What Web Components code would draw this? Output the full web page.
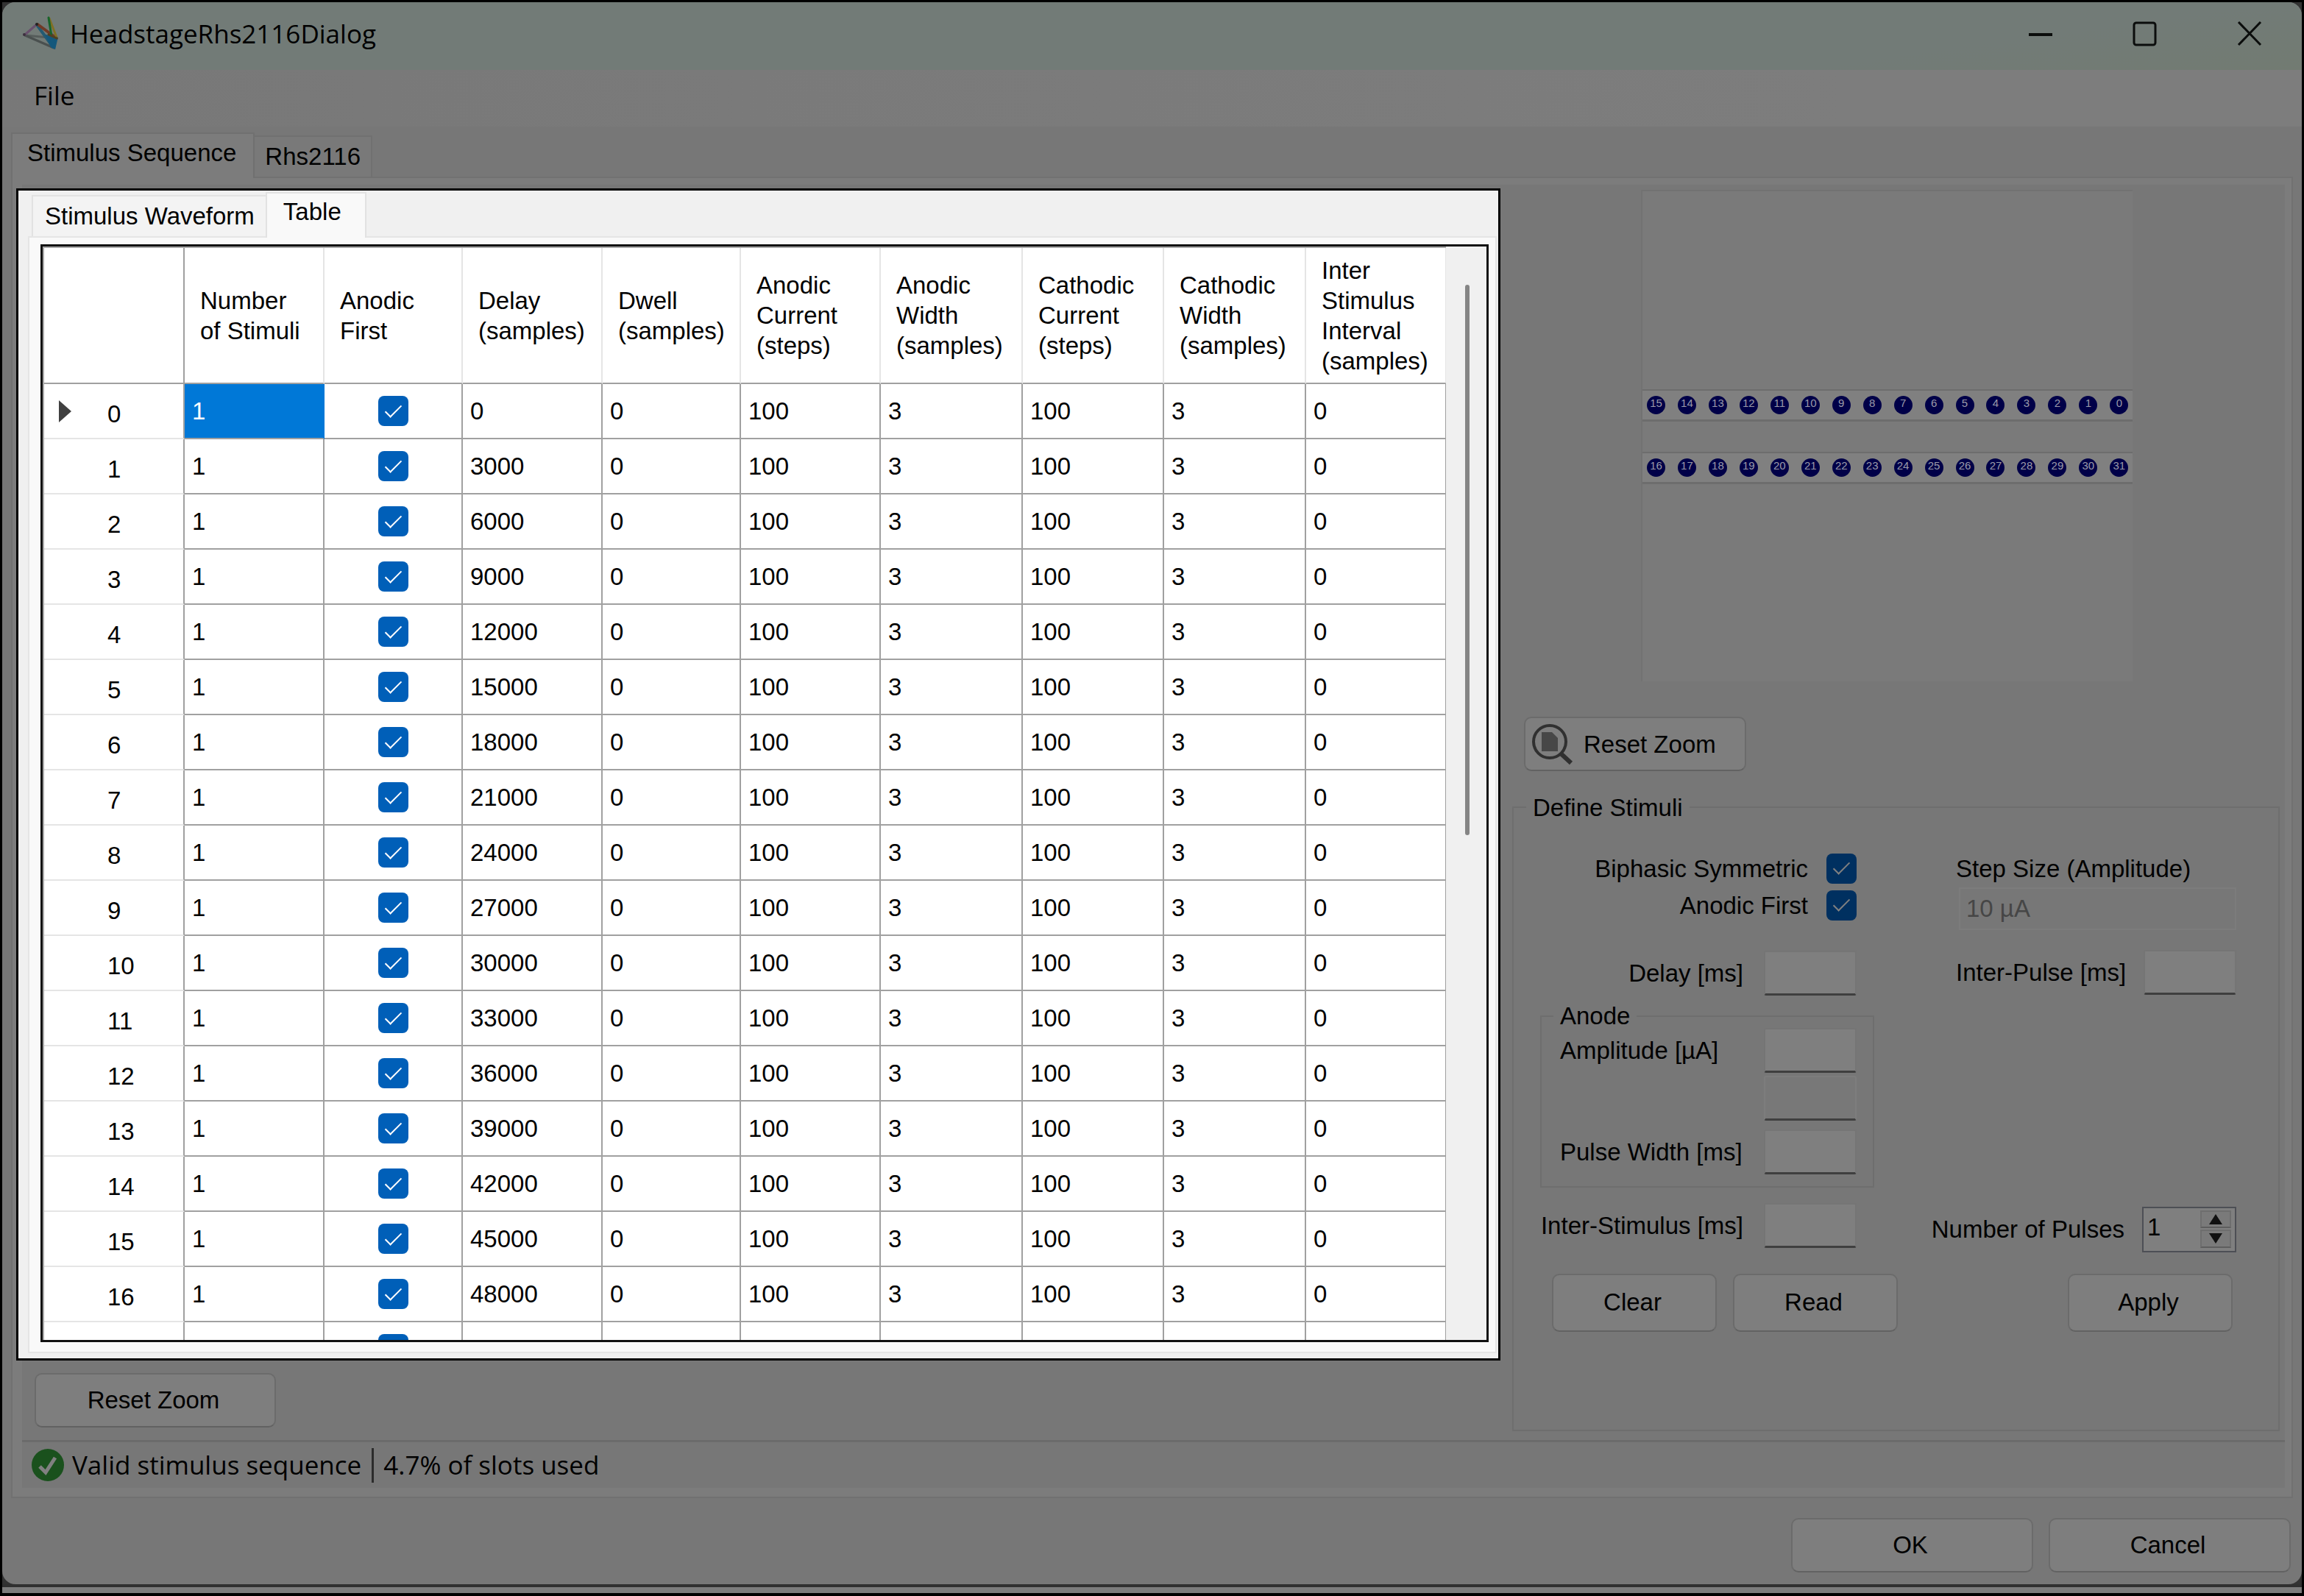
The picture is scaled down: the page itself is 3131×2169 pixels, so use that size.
<!DOCTYPE html>
<html lang="en">
<head>
<meta charset="utf-8">
<title>HeadstageRhs2116Dialog</title>
<style>
html, body { height: 100%; margin: 0; background: #000; }
body { font: 33px/41px "Liberation Sans", Arial, sans-serif; color: #000; }
</style>
</head>
<body>
<dialog-window>
  <title-bar slot="title">HeadstageRhs2116Dialog</title-bar>
  <menu-bar slot="menu">File</menu-bar>
  <tab-strip slot="tabs" tabs="Stimulus Sequence|Rhs2116" selected="0"></tab-strip>
  <split-panel>
    <spotlight-panel slot="left">
      <tab-strip slot="tabs" tabs="Stimulus Waveform|Table" selected="1" light></tab-strip>
      <stimulus-table></stimulus-table>
    </spotlight-panel>
    <push-button slot="left-actions" class="reset">Reset Zoom</push-button>
    <probe-view slot="right"></probe-view>
    <push-button slot="right" class="zoom" icon>Reset Zoom</push-button>
    <stimulus-form slot="right"></stimulus-form>
    <status-bar slot="status"></status-bar>
  </split-panel>
  <push-button slot="actions">OK</push-button>
  <push-button slot="actions">Cancel</push-button>
</dialog-window>

<script>
const define = (name, html, setup) => {
  const template = document.createElement('template');
  template.innerHTML = '<style>*{box-sizing:border-box}</style>' + html;
  customElements.define(name, class extends HTMLElement {
    connectedCallback() {
      if (this.shadowRoot) return;
      this.attachShadow({ mode: 'open' }).append(template.content.cloneNode(true));
      if (setup) setup(this, this.shadowRoot);
    }
  });
};

/* Ticked box style, shared by the table and the form */
const checkStyle = `
  input[type=checkbox] { appearance: none; display: inline-grid; place-items: center; width: 41px; height: 41px;
    margin: 0; border-radius: 8px; background: var(--tick-bg, #005fb8); vertical-align: middle; flex: none; }
  input[type=checkbox]:checked::after { content: ""; width: 9px; height: 20px; margin-bottom: 6px;
    border: solid var(--tick, #fff); border-width: 0 2px 2px 0; transform: rotate(45deg); }`;

define('dialog-window', `
<style>
  :host { display: flex; flex-direction: column; box-sizing: border-box; height: 100vh; padding: 3px 3px 4px; background: #000; }
  .frame { flex: 1; min-height: 0; display: flex; background: #333; border-bottom: 4px solid #303030; }
  .window { flex: 1; min-width: 0; display: flex; flex-direction: column; border-radius: 18px; overflow: hidden; background: #777; }
  .tabs { padding: 6px 12px 0; }
  main { flex: 1; min-height: 0; display: flex; margin: 0 12px; }
  footer { display: flex; justify-content: flex-end; gap: 21px; padding: 27px 15px 16px; }
  footer ::slotted(*) { width: 329px; height: 74px; }
  .strip { height: 8px; background: #7c7c7c; }
</style>
<div class="frame"><div class="window">
  <slot name="title"></slot><slot name="menu"></slot>
  <div class="tabs"><slot name="tabs"></slot></div>
  <main><slot></slot></main>
  <footer><slot name="actions"></slot></footer>
</div></div>
<div class="strip"></div>`);

define('title-bar', `
<style>
  :host { display: flex; align-items: center; box-sizing: border-box; height: 92px; padding: 0 0 6px 27px; flex: none;
    background: linear-gradient(172deg, #727b77 0 82%, #727b72); font-family: "Open Sans", sans-serif; }
  h1 { flex: 1; margin: 0 0 0 14px; font-size: 35px; font-weight: 400; line-height: 48px; }
  button { width: 142px; height: 86px; padding: 0; border: 0; background: none; display: grid; place-items: center; }
  svg { display: block; }
</style>
<svg width="51" height="50" viewBox="0 0 51 50" fill="none" stroke-linecap="round">
  <path d="M4 27 47 31" stroke="#565d5b" stroke-width="3"/>
  <path d="M4 27 43 44" stroke="#4a504f" stroke-width="3"/>
  <path d="M4 26 20 12" stroke="#684f6c" stroke-width="3"/>
  <path d="M21 14 42 43" stroke="#245a72" stroke-width="4"/>
  <path d="M21 12 47 31" stroke="#713a26" stroke-width="4"/>
  <path d="M37 4 47 30" stroke="#807023" stroke-width="3"/>
  <path d="M36 3 40 28" stroke="#17642b" stroke-width="3"/>
  <path d="M34 28 47 31 44 44 40 42z" fill="#14587c" stroke="#14587c" stroke-width="3"/>
  <path d="M36 26 47 31" stroke="#50401f" stroke-width="3"/>
  <circle cx="20" cy="12" r="2" fill="#222"/><circle cx="3" cy="26" r="2" fill="#3c303e"/>
</svg>
<h1><slot></slot></h1>
<button aria-label="Minimize"><svg width="34" height="34" fill="none" stroke="#0b0d0c" stroke-width="4"><path d="M1 18h32"/></svg></button>
<button aria-label="Maximize"><svg width="34" height="34" fill="none" stroke="#0b0d0c" stroke-width="3"><rect x="2" y="2" width="29" height="30" rx="3"/></svg></button>
<button aria-label="Close"><svg width="34" height="34" fill="none" stroke="#0b0d0c" stroke-width="3"><path d="M2 1 32 32M32 1 2 32"/></svg></button>`);

define('menu-bar', `
<style>
  :host { display: flex; align-items: center; box-sizing: border-box; height: 77px; flex: none; padding: 0 0 8px 43px;
    background: linear-gradient(90deg, #787878, #7d7d7d 80%); }
  button { border: 0; padding: 0; background: none; font: 35px/48px "Open Sans", sans-serif; color: #000; }
</style>
<button><slot></slot></button>`);

define('tab-strip', `
<style>
  :host { --edge: #707070; --on: #7c7c7c; --off: #797979; display: flex; align-items: flex-end; height: 62px; flex: none; }
  :host([light]) { --edge: #e2e2e2; --on: #f9f9f9; --off: #f3f3f3; height: 61px; }
  div { display: flex; align-items: flex-end; }
  button { font: inherit; color: inherit; padding: 0 16px 1px; height: 56px; background: var(--off);
    border: 2px solid var(--edge); border-bottom: 0; }
  button:not([aria-selected=true]) { padding: 0 14px 2px; }
  :host([light]) button:not([aria-selected=true]) { padding: 0 15px 2px 16px; }
  button[aria-selected=true] { height: 62px; padding: 0 23px 10px 20px; background: var(--on); margin: 0 -2px -2px 0; z-index: 1; }
  :host([light]) button[aria-selected=true] { margin: 0 0 -2px -2px; padding: 0 32px 12px 22px; }
</style>
<div role="tablist"></div>`, (host, root) => {
  const list = root.querySelector('[role=tablist]');
  host.getAttribute('tabs').split('|').forEach((text, i) => {
    const b = document.createElement('button');
    b.setAttribute('role', 'tab');
    b.setAttribute('aria-selected', String(i === +host.getAttribute('selected')));
    b.textContent = text;
    list.append(b);
  });
});

define('split-panel', `
<style>
  :host { flex: 1; min-width: 0; min-height: 0; display: flex; box-sizing: border-box; padding: 9px 9px 12px 13px;
    border: 2px solid #717171; background: #7c7c7c; }
  .inner { flex: 1; min-width: 0; display: flex; flex-direction: column; background: #777; }
  .cols { flex: 1; min-height: 0; display: grid; grid-template-columns: 2009fr 1066fr; grid-template-rows: minmax(0, 1fr); }
  .left, .right { display: flex; flex-direction: column; min-width: 0; min-height: 0; }
  .left { padding-top: 5px; }
  .right { padding: 7px 7px 12px 16px; }
  .actions { display: flex; padding: 17px; }
  ::slotted(spotlight-panel) { margin-left: -8px; }
  ::slotted(.reset) { width: 328px; height: 74px; }
  ::slotted(.zoom) { width: 302px; height: 74px; margin: 48px 0 0 16px; }
</style>
<div class="inner">
  <div class="cols">
    <div class="left"><slot name="left"></slot><div class="actions"><slot name="left-actions"></slot></div></div>
    <div class="right"><slot name="right"></slot></div>
  </div>
  <slot name="status"></slot>
</div>`);

define('spotlight-panel', `
<style>
  :host { flex: 1; min-height: 0; display: flex; flex-direction: column; box-sizing: border-box;
    border: 3px solid #000; background: #f0f0f0; padding: 1px 2px 7px 13px; }
  .tabs { padding-left: 5px; }
  .page { flex: 1; min-height: 0; display: flex; border: 2px solid #e5e5e5; background: #f9f9f9; padding: 9px 9px 13px 15px; }
</style>
<div class="tabs"><slot name="tabs"></slot></div>
<div class="page"><slot></slot></div>`);

define('stimulus-table', `
<style>
  :host { flex: 1; min-width: 0; display: flex; border: 3px solid #111; background: #f0f0f0; overflow: hidden; box-sizing: border-box; }
  .view { flex: 1; min-width: 0; overflow: hidden; background: #fff; border: solid #a8a8a8; border-width: 2px 0 0 2px; }
  table { width: 100%; table-layout: fixed; border-spacing: 0; }
  th, td { padding: 0 0 0 10px; text-align: left; font-weight: 400; border: solid #a0a0a0; border-width: 0 2px 2px 0; }
  td { height: 75px; }
  thead th { height: 185px; padding-left: 21px; border-right-color: #e5e5e5; white-space: pre; }
  tr > :first-child { border-right-color: #a0a0a0; }
  tbody th { padding: 8px 0 0 20px; border-bottom-color: #e5e5e5; }
  .row { display: grid; grid-template-columns: 66px 1fr; align-items: center; }
  .row svg { margin-top: -6px; }
  .on { background: #0078d7; color: #fff; border-color: #0078d7 #0078d7 #a0a0a0; }
  .c { text-align: center; padding: 0; line-height: 0; }
  .bar { width: 55px; padding: 52px 0 0 26px; }
  .bar i { display: block; width: 6px; height: 748px; border-radius: 3px; background: #858585; }
  ${checkStyle}
</style>
<div class="view"><table>
  <colgroup></colgroup><thead><tr></tr></thead><tbody></tbody>
</table></div>
<div class="bar"><i></i></div>`, (host, root) => {
  const heads = ['', 'Number\nof Stimuli', 'Anodic\nFirst', 'Delay\n(samples)', 'Dwell\n(samples)', 'Anodic\nCurrent\n(steps)',
    'Anodic\nWidth\n(samples)', 'Cathodic\nCurrent\n(steps)', 'Cathodic\nWidth\n(samples)', 'Inter\nStimulus\nInterval\n(samples)'];
  const widths = [191, 190, 188, 190, 188, 190, 193, 192, 193, 191];
  root.querySelector('colgroup').innerHTML = widths.map(w => `<col style="width:${w}px">`).join('');
  root.querySelector('thead tr').innerHTML = heads.map(h => h ? `<th scope="col">${h}</th>` : '<td></td>').join('');
  const arrow = '<svg width="18" height="30"><path d="M0 0 17 15 0 30z" fill="#404040"/></svg>';
  let rows = '';
  for (let i = 0; i < 18; i++) {
    rows += `<tr><th scope="row"><div class="row"><span>${i ? '' : arrow}</span><span>${i}</span></div></th>
      <td${i ? '' : ' class="on"'}>1</td><td class="c"><input type="checkbox" checked aria-label="Anodic First ${i}"></td>
      <td>${i * 3000}</td><td>0</td><td>100</td><td>3</td><td>100</td><td>3</td><td>0</td></tr>`;
  }
  root.querySelector('tbody').innerHTML = rows;
});

define('push-button', `
<style>
  :host { display: block; flex: none; box-sizing: border-box; }
  button { width: 100%; height: 100%; display: flex; align-items: center; justify-content: center; padding: 0 5px 2px 0;
    font: inherit; color: inherit; background: #7e7e7e; border: 2px solid #6b6b6b; border-bottom-color: #626262; border-radius: 10px; }
  svg { display: none; }
  :host([icon]) button { justify-content: flex-start; padding: 1px 0 0 8px; gap: 13px; }
  :host([icon]) svg { display: block; }
</style>
<button><svg width="58" height="58" viewBox="0 0 58 58" fill="none">
  <circle cx="25" cy="26" r="22" stroke="#303030" stroke-width="4"/><path d="m40 42 14 13" stroke="#303030" stroke-width="6"/>
  <path d="M14 13h14l8 8v18H14z" fill="#474747"/></svg><slot></slot></button>`);

define('probe-view', `
<style>
  :host { --edge: #6d6d6d; display: flex; flex-direction: column; justify-content: center; gap: 41px; flex: none;
    width: 64%; aspect-ratio: 1; margin-left: 175px; border: solid #727272; border-width: 2px 0 0 2px; background: #7a7a7a;
    box-sizing: border-box; padding-top: 2px; }
  .row { display: flex; justify-content: space-between; align-items: center; height: 44px; padding: 0 5px 0 6px;
    background: #808080; border: solid var(--edge); border-width: 2px 0 3px; }
  .row span { width: 25px; height: 25px; border-radius: 50%; background: #000048; color: #9a9aa8;
    font: 15px/20px "Liberation Sans", sans-serif; text-align: center; }
</style>
<div class="row"></div><div class="row"></div>`, (host, root) => {
  const [top, bottom] = root.querySelectorAll('.row');
  for (let i = 0; i < 16; i++) {
    top.innerHTML += `<span>${15 - i}</span>`;
    bottom.innerHTML += `<span>${16 + i}</span>`;
  }
});

define('form-field', `
<style>
  :host { display: flex; align-items: center; justify-content: flex-end; gap: 28px; white-space: nowrap; }
  :host([spread]) { justify-content: space-between; gap: 0; }
  :host([check]) { gap: 25px; --tick-bg: #003060; --tick: #808080; }
  input:not([type=checkbox]) { width: 126px; height: 61px; padding: 0 8px; font: inherit; color: inherit; background: #7f7f7f;
    border: 2px solid #757575; border-bottom: 3px solid #3f3f3f; border-radius: 3px; flex: none; }
  input:disabled { background: #787878 !important; border-color: #7d7d7d #7d7d7d #3f3f3f !important; }
  ${checkStyle}
</style>
<label for="i"><slot></slot></label><input id="i" type="text">`, (host, root) => {
  const input = root.querySelector('input');
  if (host.hasAttribute('check')) { input.type = 'checkbox'; input.checked = true; }
  input.disabled = host.hasAttribute('disabled');
  if (host.title) input.setAttribute('aria-label', host.title);
});

define('number-field', `
<style>
  :host { display: flex; align-items: center; justify-content: flex-end; gap: 24px; white-space: nowrap; }
  .box { display: flex; flex: none; width: 128px; height: 62px; border: 2px solid #4d4f55; background: #7f7f7f; padding: 3px 5px 4px 0; }
  input { flex: 1; min-width: 0; padding: 0 0 5px 5px; border: 0; background: none; font: inherit; color: inherit; }
  .spin { display: flex; flex-direction: column; gap: 2px; width: 42px; }
  button { flex: 1; display: grid; place-items: center; padding: 0; border: 2px solid #6e6e6e; border-bottom-color: #5e5e5e; background: #7a7a7a; }
</style>
<label for="n"><slot></slot></label>
<div class="box"><input id="n" inputmode="numeric" value="1"><div class="spin">
  <button aria-label="Increase"><svg width="18" height="14"><path d="M9 0 18 14H0z" fill="#111"/></svg></button>
  <button aria-label="Decrease"><svg width="18" height="14"><path d="M9 14 18 0H0z" fill="#111"/></svg></button>
</div></div>`);

define('stimulus-form', `
<style>
  :host { flex: 1; display: flex; margin-top: 29px; min-height: 0; }
  fieldset { min-width: 0; margin: 0; border: 2px solid #6e6e6e; }
  legend { padding: 0 9px; }
  .main { flex: 1; padding: 42px 57px 0 36px; }
  .main > legend { margin-left: -19px; }
  .cols { display: flex; justify-content: space-between; }
  .left { width: 486px; display: flex; flex-direction: column; }
  .left > form-field { margin-right: 56px; }
  .right { width: 412px; display: flex; flex-direction: column; }
  .second { margin-top: 9px; }
  .delay { margin-top: 41px; }
  .anode { margin: 12px 32px 0 0; padding: 0 22px 16px 25px; display: grid; gap: 4px; }
  .anode legend { margin-left: -9px; line-height: 32px; }
  .pulse { margin-top: 8px; }
  .stim { margin-top: 21px; }
  .buttons { display: flex; gap: 22px; margin: 35px 0 0 16px; }
  push-button { width: 224px; height: 79px; }
  .step { display: flex; flex-direction: column; gap: 5px; padding-left: 31px; }
  .step input { height: 58px; margin-left: 4px; padding: 0 8px; font: inherit; color: #464646; background: #777; border: 2px solid #7c7c7c; min-width: 0; }
  .inter { margin-top: 27px; padding-left: 31px; }
  number-field { margin-top: auto; }
  .apply { display: flex; justify-content: flex-end; padding-right: 5px; margin-top: 29px; }
</style>
<fieldset class="main"><legend>Define Stimuli</legend>
  <div class="cols">
    <div class="left">
      <form-field check>Biphasic Symmetric</form-field>
      <form-field check class="second">Anodic First</form-field>
      <form-field class="delay">Delay [ms]</form-field>
      <fieldset class="anode"><legend>Anode</legend>
        <form-field spread>Amplitude [µA]</form-field>
        <form-field disabled title="Actual amplitude"></form-field>
        <form-field spread class="pulse">Pulse Width [ms]</form-field>
      </fieldset>
      <form-field class="stim">Inter-Stimulus [ms]</form-field>
      <div class="buttons"><push-button>Clear</push-button><push-button>Read</push-button></div>
    </div>
    <div class="right">
      <div class="step"><label for="step">Step Size (Amplitude)</label><input id="step" value="10 µA" disabled></div>
      <form-field spread class="inter">Inter-Pulse [ms]</form-field>
      <number-field>Number of Pulses</number-field>
      <div class="apply"><push-button>Apply</push-button></div>
    </div>
  </div>
</fieldset>`);

define('status-bar', `
<style>
  :host { display: flex; align-items: center; height: 65px; flex: none; box-sizing: border-box; padding: 0 0 0 13px;
    border-top: 3px solid #6b6b6b; font: 35px/45px "Open Sans", sans-serif; }
  i { width: 3px; height: 47px; margin: 0 13px 0 14px; background: #2c2c2c; }
  span { padding-bottom: 2px; }
  svg { margin-right: 11px; }
</style>
<svg width="44" height="44" viewBox="0 0 44 44"><circle cx="22" cy="22" r="22" fill="#1a511d"/>
  <path d="M11 24 19 32 32 12" fill="none" stroke="#808080" stroke-width="5"/></svg>
<span>Valid stimulus sequence</span><i></i><span>4.7% of slots used</span>`);
</script>
</body>
</html>
